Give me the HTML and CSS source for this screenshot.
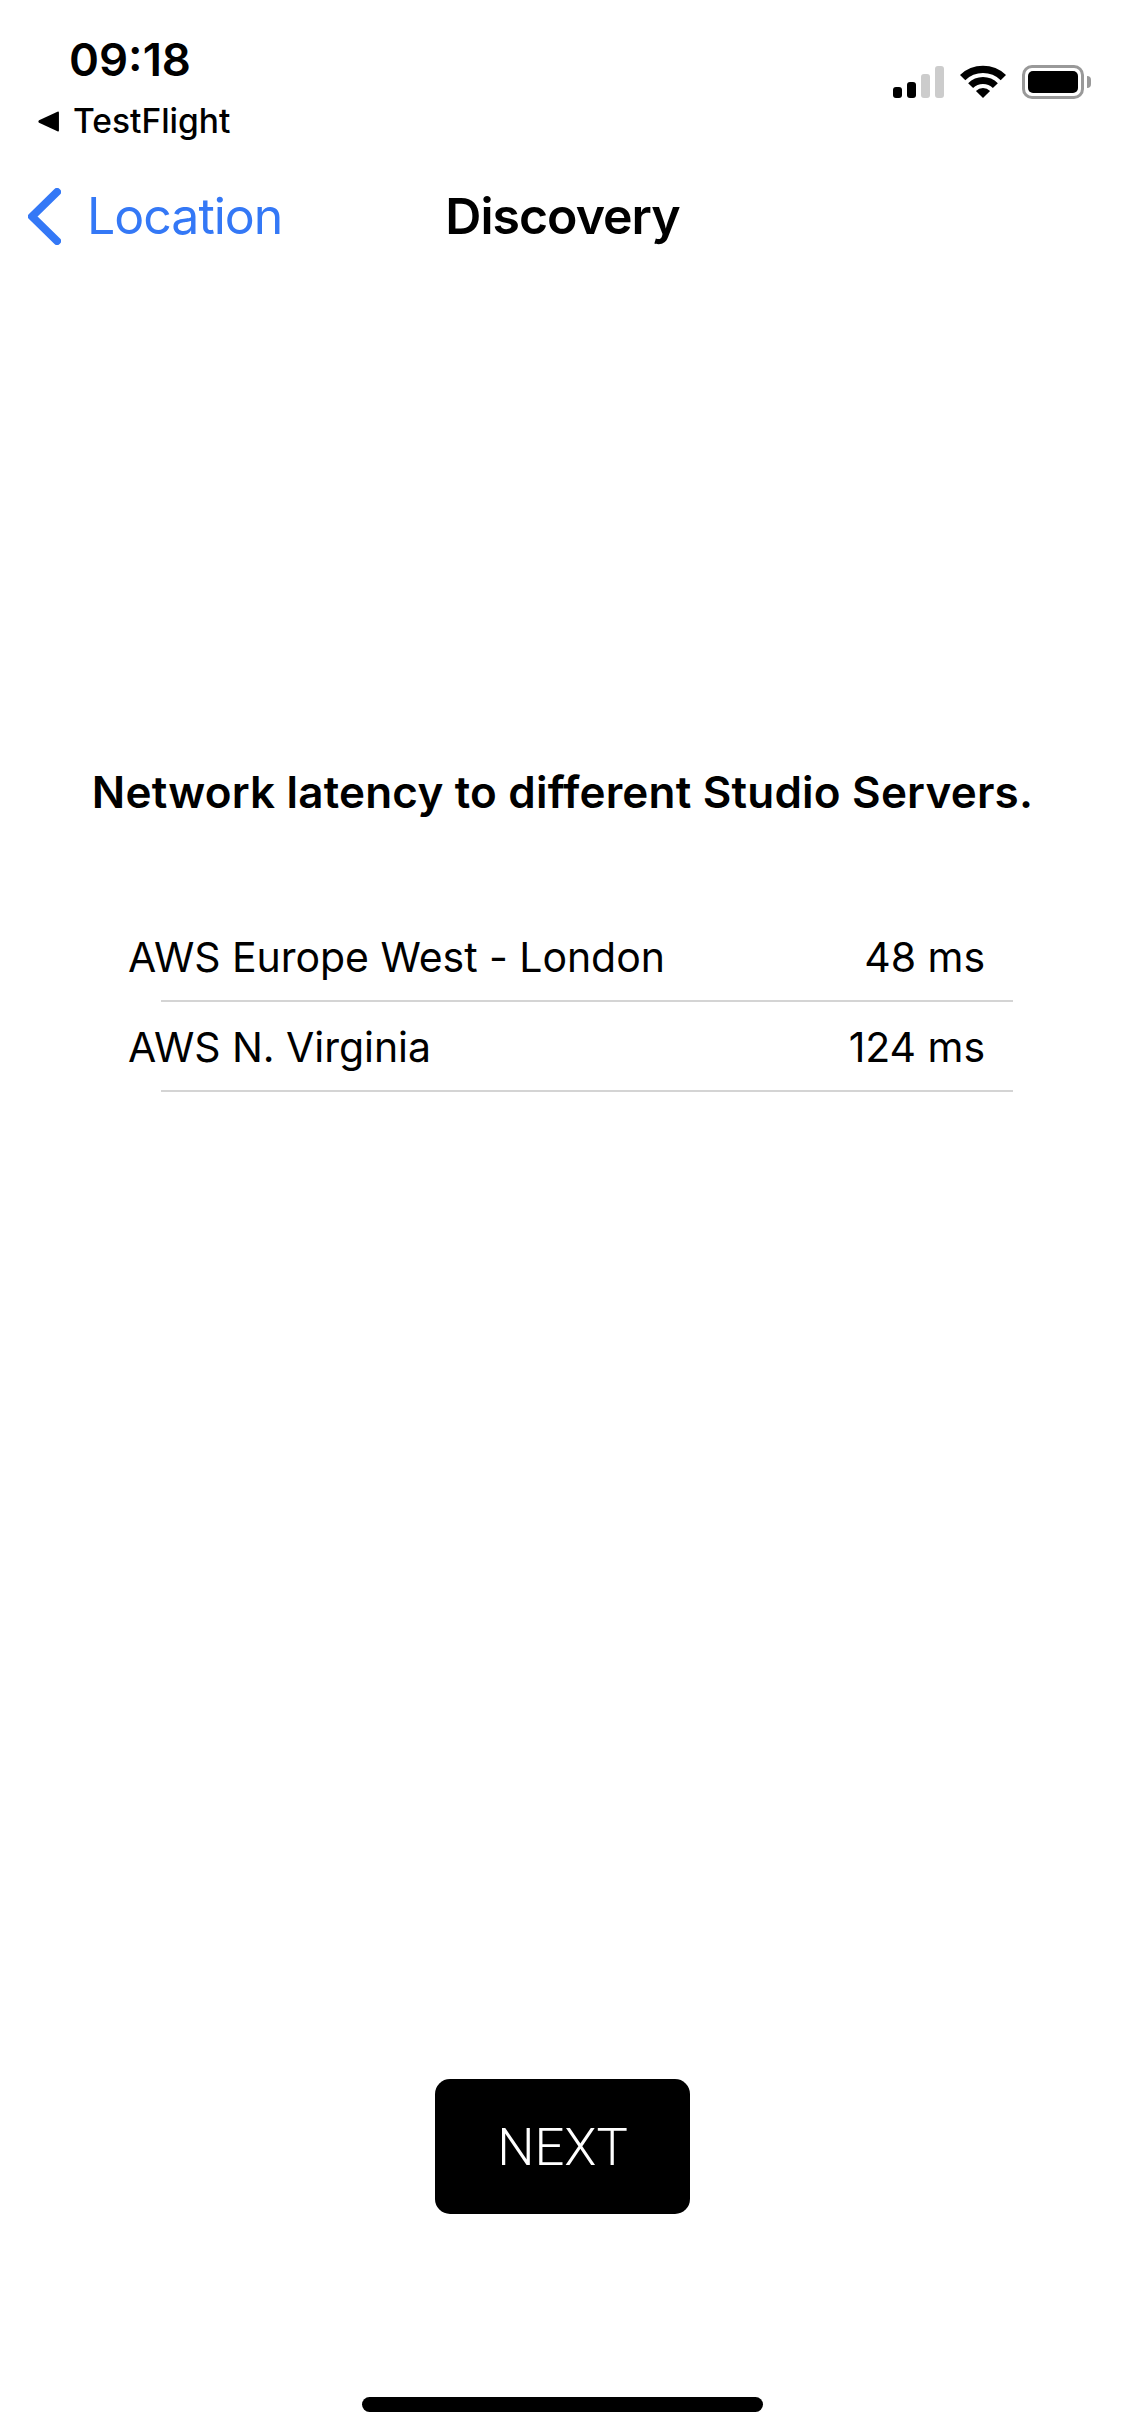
FILE: index.html
```html
<!DOCTYPE html>
<html lang="en">
<head>
    <meta charset="UTF-8">
    <meta name="viewport" content="width=device-width, initial-scale=1.0">
    <title>Discovery</title>
    <link rel="stylesheet" href="styles.css">
</head>
<body>
    <div class="status-bar">
        <div class="status-left">
            <div class="time">09:18</div>
            <div class="return-app">
                <svg class="return-arrow" viewBox="0 0 22 20"><path d="M20 1.5 L20 18.5 Q20 20 18.6 19.4 L1 11.2 Q-0.3 10 1 8.8 L18.6 0.6 Q20 0 20 1.5Z"/></svg>
                <span>TestFlight</span>
            </div>
        </div>
        <div class="status-right">
            <div class="signal">
                <span class="bar bar-1"></span>
                <span class="bar bar-2"></span>
                <span class="bar bar-3"></span>
                <span class="bar bar-4"></span>
            </div>
            <svg class="wifi" viewBox="0 0 46 34">
                <path d="M0 10 A33 33 0 0 1 46 10 L40.7 15.3 A25 25 0 0 0 5.3 15.3Z"/>
                <path d="M8.15 18.15 A21 21 0 0 1 37.85 18.15 L32.9 23.1 A14 14 0 0 0 13.1 23.1Z"/>
                <path d="M15.93 25.93 A10 10 0 0 1 30.07 25.93 L23 33Z"/>
            </svg>
            <div class="battery">
                <div class="battery-body"><div class="battery-level"></div></div>
                <div class="battery-cap"></div>
            </div>
        </div>
    </div>

    <div class="nav">
        <div class="nav-back">
            <svg class="chevron" viewBox="0 0 33 57"><path d="M29 4 L4 28.5 L29 53"/></svg>
            <span>Location</span>
        </div>
        <div class="nav-title">Discovery</div>
        <div></div>
    </div>

    <div class="content">
        <h2 class="heading">Network latency to different Studio Servers.</h2>
        <div class="server-list">
            <div class="server-row">
                <span>AWS Europe West - London</span>
                <span>48 ms</span>
            </div>
            <div class="server-row">
                <span>AWS N. Virginia</span>
                <span>124 ms</span>
            </div>
        </div>
    </div>

    <button class="next-btn">NEXT</button>
    <div class="home-bar"></div>
</body>
</html>
```

FILE: styles.css
```css
html, body {
    height: 2436px;
}
body {
    margin: 0;
    background: #fff;
    color: #000;
    font-family: 'Inter', 'Liberation Sans', sans-serif;
    display: flex;
    flex-direction: column;
    overflow: hidden;
}
.status-bar {
    display: flex;
    justify-content: space-between;
    height: 170px;
    padding: 32px 34px 0 38px;
    box-sizing: border-box;
}
.time {
    margin-left: 31px;
    font-size: 45.5px;
    line-height: 56px;
    font-weight: 600;
}
.return-app {
    display: flex;
    align-items: center;
    gap: 12px;
    margin-top: 11px;
    font-size: 33.5px;
    line-height: 44px;
    font-weight: 500;
}
.return-arrow {
    width: 23px;
    height: 21px;
}
.status-right {
    display: flex;
    align-items: flex-start;
    padding-top: 33px;
}
.signal {
    display: flex;
    align-items: flex-end;
    gap: 5px;
    height: 33px;
    margin-right: 16px;
}
.bar {
    width: 9px;
    border-radius: 3px;
    background: #000;
}
.bar-1 { height: 11px; }
.bar-2 { height: 16px; }
.bar-3 { height: 24px; background: #ccc; }
.bar-4 { height: 32px; background: #ccc; }
.wifi {
    width: 46px;
    height: 34px;
    margin-right: 16px;
}
.battery {
    display: flex;
    align-items: center;
}
.battery-body {
    width: 62px;
    height: 34px;
    box-sizing: border-box;
    border: 3px solid #999;
    border-radius: 10px;
    padding: 3px;
}
.battery-level {
    height: 100%;
    background: #000;
    border-radius: 5px;
}
.battery-cap {
    width: 4px;
    height: 12px;
    margin-left: 3px;
    background: #999;
    border-radius: 0 4px 4px 0;
}
.nav {
    display: grid;
    grid-template-columns: 1fr auto 1fr;
    align-items: center;
    height: 92px;
    font-size: 50px;
}
.nav-back {
    display: flex;
    align-items: center;
    gap: 26px;
    padding-left: 28px;
    color: #3478f6;
    letter-spacing: -1px;
}
.chevron {
    width: 33px;
    height: 57px;
    fill: none;
    stroke: #3478f6;
    stroke-width: 8;
    stroke-linecap: round;
    stroke-linejoin: round;
}
.nav-title {
    font-weight: 600;
    letter-spacing: -1px;
}
.content {
    flex: 1;
    padding-top: 498px;
}
.heading {
    margin: 0;
    text-align: center;
    font-size: 44px;
    line-height: 64px;
    font-weight: 600;
    letter-spacing: 0.2px;
}
.server-list {
    margin-top: 88px;
}
.server-row {
    position: relative;
    display: flex;
    justify-content: space-between;
    align-items: center;
    height: 90px;
    padding: 0 140px 0 128px;
    font-size: 41px;
    letter-spacing: -0.05px;
}
.server-row::after {
    content: "";
    position: absolute;
    left: 161px;
    right: 112px;
    bottom: 0;
    height: 2px;
    background: #d4d4d4;
}
.next-btn {
    display: block;
    width: 255px;
    height: 135px;
    margin: 0 auto 183px;
    border: none;
    border-radius: 15px;
    background: #000;
    color: #fff;
    font-family: 'Roboto', 'Liberation Sans', sans-serif;
    font-weight: 300;
    font-size: 52.5px;
}
.home-bar {
    width: 401px;
    height: 15px;
    margin: 0 auto 24px;
    border-radius: 8px;
    background: #000;
}
```
